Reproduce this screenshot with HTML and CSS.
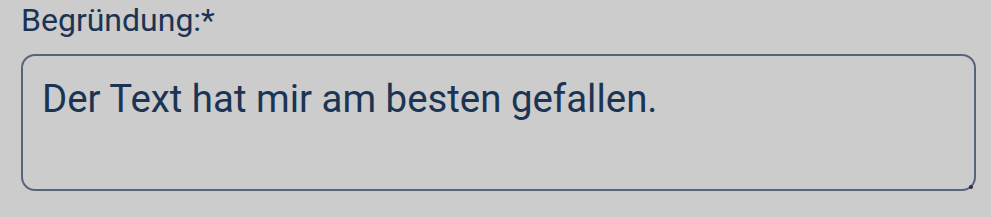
FILE: index.html
```html
<!DOCTYPE html>
<html lang="de">
<head>
    <meta charset="UTF-8">
    <title>Begründung</title>
    <link rel="stylesheet" href="styles.css">
</head>
<body>

<div class="field">
    <label class="field-label" for="reason">Begründung:*</label>
    <div class="input-wrap">
        <textarea id="reason" class="field-input">Der Text hat mir am besten gefallen.</textarea>
    </div>
</div>

</body>
</html>
```

FILE: styles.css
```css
/* Page */
body {
    margin: 0;
    padding: 0;
    background: #cccccc;
    font-family: Roboto, 'DejaVu Sans', sans-serif;
    color: #1b3454;
}

.field {
    display: flex;
    flex-direction: column;
    padding: 0 15px 0 21px;
}

.field-label {
    font-size: 32px;
    line-height: 40px;
    margin-bottom: 14px;
}

.input-wrap {
    position: relative;
    display: flex;
}

.input-wrap::after {
    content: "";
    position: absolute;
    right: 3px;
    bottom: 2px;
    width: 4px;
    height: 4px;
    border-radius: 50%;
    background: #2a2f38;
}

.field-input {
    flex: 1;
    box-sizing: border-box;
    height: 137px;
    padding: 20px 19px;
    font-family: inherit;
    font-size: 38.4px;
    line-height: 46px;
    color: #1b3454;
    background: transparent;
    border: 2px solid #56667a;
    border-radius: 14px;
    resize: none;
    outline: none;
}
```
